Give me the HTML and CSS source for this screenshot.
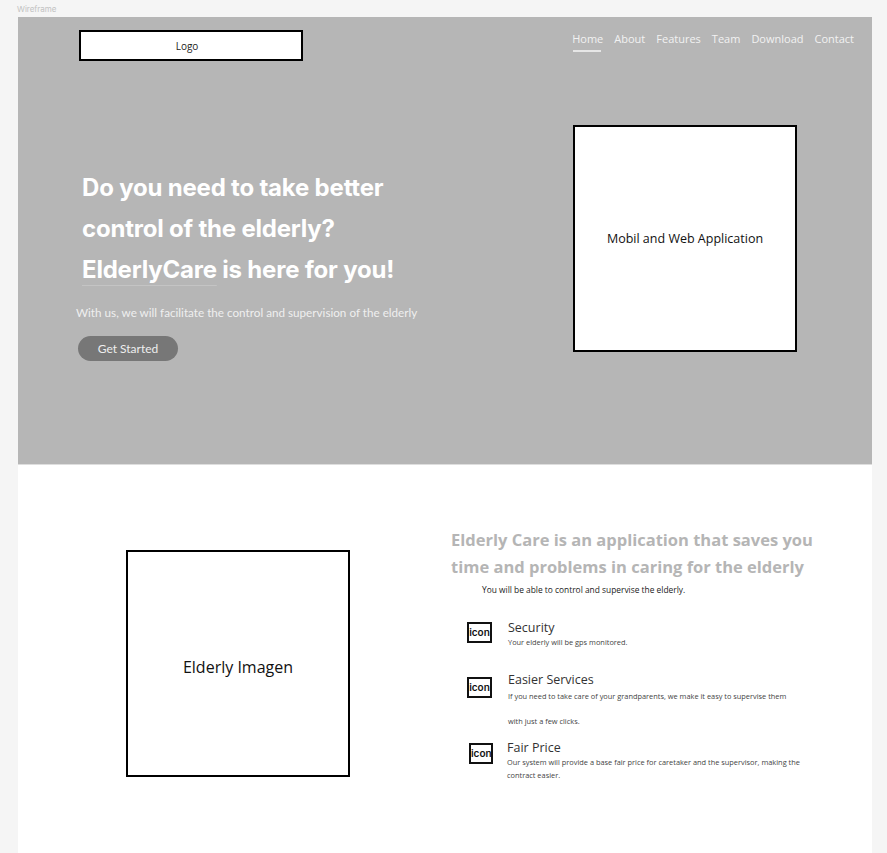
FILE: index.html
```html
<!DOCTYPE html>
<html lang="en">
<head>
<meta charset="utf-8">
<title>Wireframe</title>
<link rel="stylesheet" href="styles.css">
</head>
<body>
<div class="label">Wireframe</div>
<div class="frame">
  <section class="hero">
    <header class="topbar">
      <div class="logo">Logo</div>
      <nav class="nav">
        <a class="active">Home</a>
        <a>About</a>
        <a>Features</a>
        <a>Team</a>
        <a>Download</a>
        <a>Contact</a>
      </nav>
    </header>
    <div class="hero-main">
      <div class="hero-text">
        <h1>Do you need to take better<br>control of the elderly?<br><span class="brand">ElderlyCare</span> is here for you!</h1>
        <p class="lead">With us, we will facilitate the control and supervision of the elderly</p>
        <button class="cta">Get Started</button>
      </div>
      <div class="placeholder app-box">Mobil and Web Application</div>
    </div>
  </section>
  <section class="about">
    <div class="placeholder elderly-box">Elderly Imagen</div>
    <div class="about-text">
      <h2>Elderly Care is an application that saves you time and problems in caring for the elderly</h2>
      <p class="intro">You will be able to control and supervise the elderly.</p>
      <div class="feature f1">
        <div class="icon">icon</div>
        <div class="ftext">
          <h3>Security</h3>
          <p>Your elderly will be gps monitored.</p>
        </div>
      </div>
      <div class="feature f2">
        <div class="icon">icon</div>
        <div class="ftext">
          <h3>Easier Services</h3>
          <p class="tall">If you need to take care of your grandparents, we make it easy to supervise them<br>with just a few clicks.</p>
        </div>
      </div>
      <div class="feature f3">
        <div class="icon">icon</div>
        <div class="ftext">
          <h3>Fair Price</h3>
          <p>Our system will provide a base fair price for caretaker and the supervisor, making the contract easier.</p>
        </div>
      </div>
    </div>
  </section>
</div>
</body>
</html>
```

FILE: styles.css
```css
* { box-sizing: border-box; }
html, body { margin: 0; padding: 0; }
body {
  background: #f5f5f5;
  font-family: "Open Sans", "DejaVu Sans", sans-serif;
  width: 887px;
  height: 853px;
  overflow: hidden;
}
.label {
  height: 17px;
  padding: 4px 0 0 17px;
  font-family: "Inter", sans-serif;
  font-size: 8px;
  line-height: 10px;
  color: #c2c2c2;
}
.frame {
  margin: 0 15px 0 18px;
  background: #fff;
  height: 836px;
}
.hero {
  height: 448px;
  background: #b6b6b6;
  border-bottom: 1px solid #dedede;
}
.topbar {
  display: flex;
  justify-content: space-between;
  align-items: flex-start;
  padding: 13px 17px 0 61px;
}
.logo {
  width: 224px;
  height: 31px;
  border: 2px solid #000;
  background: #fff;
  display: flex;
  align-items: center;
  justify-content: center;
  padding-right: 8px;
  font-size: 10px;
  color: #222;
}
.nav {
  display: flex;
  gap: 11px;
  padding-top: 1px;
  margin-right: 1px;
}
.nav a {
  position: relative;
  font-size: 11px;
  line-height: 16px;
  color: #f2f2f2;
}
.nav a.active::after {
  content: "";
  position: absolute;
  left: 1px;
  width: 28px;
  top: 19px;
  height: 2px;
  background: #e6e6e6;
}
.hero-main {
  display: flex;
  align-items: flex-start;
  padding-left: 57px;
}
.hero-text {
  width: 498px;
  padding-top: 106px;
}
h1 {
  margin: 0 0 0 7px;
  font-family: "Inter", sans-serif;
  font-weight: 700;
  font-size: 24px;
  line-height: 41px;
  color: #fff;
  letter-spacing: -0.2px;
}
.brand {
  text-decoration: underline;
  text-decoration-color: #c4c4c4;
  text-decoration-thickness: 1px;
  text-underline-offset: 7px;
}
.lead {
  margin: 15px 0 0 1px;
  font-family: "Lato", sans-serif;
  font-size: 11.7px;
  color: #efefef;
}
.cta {
  margin: 17px 0 0 3px;
  width: 100px;
  height: 25px;
  border: 0;
  border-radius: 13px;
  background: #777;
  color: #eeeeee;
  font-family: "Lato", sans-serif;
  font-size: 12px;
}
.placeholder {
  border: 2px solid #000;
  background: #fff;
  display: flex;
  align-items: center;
  justify-content: center;
  color: #111;
}
.app-box {
  margin-top: 64px;
  width: 224px;
  height: 227px;
  font-size: 12.5px;
}
.about {
  display: flex;
  align-items: flex-start;
  padding-left: 108px;
}
.elderly-box {
  margin-top: 85px;
  width: 224px;
  height: 227px;
  padding-top: 6px;
  font-size: 16px;
}
.about-text {
  margin-left: 101px;
  padding-top: 61px;
  width: 380px;
}
h2 {
  margin: 0;
  font-family: "Open Sans", sans-serif;
  font-weight: 700;
  font-size: 16.5px;
  line-height: 27px;
  color: #b5b5b5;
}
.intro {
  margin: 4px 0 0 31px;
  font-size: 8.4px;
  line-height: 12px;
  color: #222;
}
.feature {
  display: flex;
  align-items: flex-start;
  margin-left: 16px;
}
.f1 { margin-top: 24px; }
.f2 { margin-top: 23px; }
.f3 { margin-top: 6px; margin-left: 18px; }
.icon {
  width: 25px;
  height: 21px;
  border: 2px solid #111;
  font-family: "Inter", sans-serif;
  font-weight: 600;
  font-size: 10px;
  line-height: 16px;
  text-align: center;
  color: #111;
  overflow: hidden;
}
.f1 .icon { margin-top: 2px; }
.f2 .icon { margin-top: 5px; }
.f3 .icon { margin-top: 3px; width: 24px; }
.ftext { margin-left: 16px; }
.f3 .ftext { margin-left: 14px; }
h3 {
  margin: 0;
  font-weight: 400;
  font-size: 12.5px;
  line-height: 16px;
  color: #333;
}
.ftext p {
  margin: 0;
  font-size: 7.4px;
  line-height: 13px;
  color: #444;
  width: 300px;
}
.ftext p.tall { line-height: 25px; margin-top: -4px; }
```
